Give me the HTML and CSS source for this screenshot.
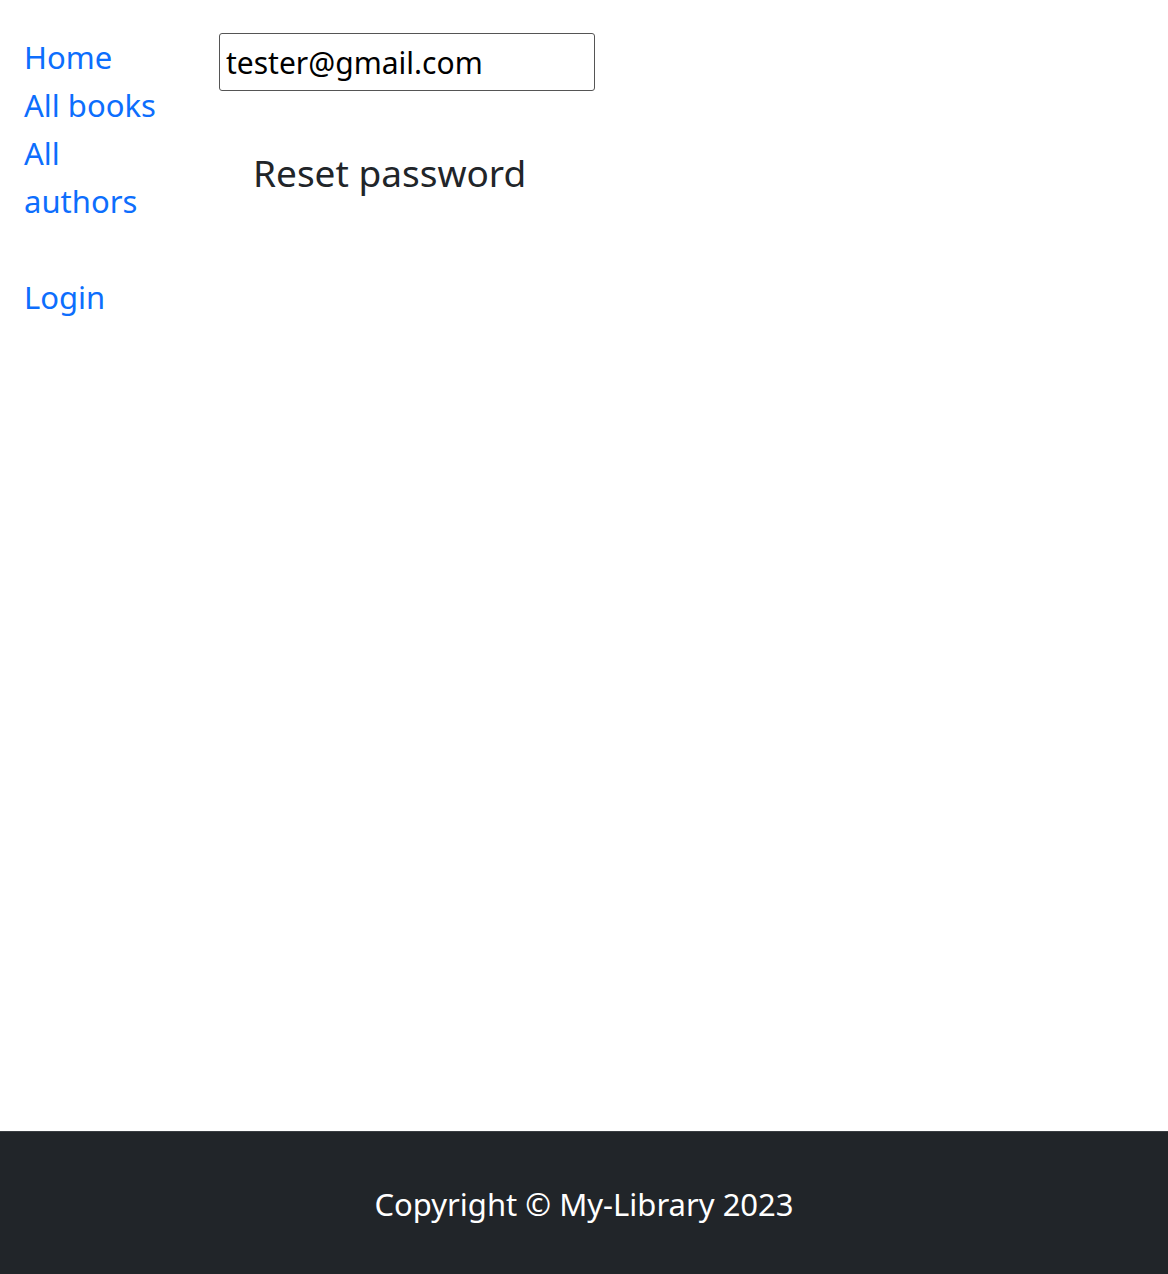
FILE: index.html
```html
<!DOCTYPE html>
<html lang="en">
<head>
<meta charset="utf-8">
<title>Reset password</title>
<link rel="stylesheet" href="styles.css">
</head>
<body>
<div class="page">
  <div class="main">
    <nav class="sidebar">
      <ul class="nav-list">
        <li><a href="#">Home</a></li>
        <li><a href="#">All books</a></li>
        <li><a href="#">All authors</a></li>
      </ul>
      <ul class="nav-list nav-user">
        <li><a href="#">Login</a></li>
      </ul>
    </nav>
    <div class="content">
      <form class="reset-form">
        <input class="email-input" type="email" name="email" value="tester@gmail.com">
        <button class="btn-reset" type="submit">Reset password</button>
      </form>
    </div>
  </div>
  <footer class="footer">
    <p class="copyright">Copyright © My-Library 2023</p>
  </footer>
</div>
</body>
</html>
```
FILE: styles.css
```css
html, body {
  margin: 0;
  padding: 0;
}
body {
  font-family: "Noto Sans", "Open Sans", sans-serif;
  font-size: 31px;
  line-height: 48px;
  color: #212529;
  background: #fff;
}
.page {
  min-height: 100vh;
  display: flex;
  flex-direction: column;
}
.main {
  flex: 1;
  display: flex;
  padding-top: 33px;
}
.sidebar {
  width: 195px;
  box-sizing: border-box;
  padding: 0 24px;
  flex-shrink: 0;
}
.nav-list {
  list-style: none;
  margin: 0;
  padding: 0;
}
.nav-user {
  margin-top: 48px;
}
.nav-list a {
  color: #0d6efd;
  text-decoration: none;
}
.content {
  flex: 1;
  padding-left: 24px;
}
.reset-form {
  display: flex;
  flex-direction: column;
  align-items: flex-start;
}
.email-input {
  width: 376px;
  height: 58px;
  box-sizing: border-box;
  margin: 0;
  padding: 2px 6px;
  border: 1.5px solid #555;
  border-radius: 3px;
  font-family: inherit;
  font-size: 30px;
  line-height: 48px;
  color: #000;
  background: #fff;
}
.btn-reset {
  margin-top: 34px;
  padding: 16px 32px;
  border: 2px solid transparent;
  background: transparent;
  font-family: inherit;
  font-size: 37px;
  line-height: 60px;
  color: #212529;
  cursor: pointer;
}
.footer {
  background: #212529;
  border-top: 1px solid #3a3e42;
  height: 143px;
  box-sizing: border-box;
  padding-top: 1px;
  display: flex;
  align-items: center;
  justify-content: center;
}
.copyright {
  margin: 0;
  color: #fff;
  font-size: 31px;
  line-height: 48px;
}
```
